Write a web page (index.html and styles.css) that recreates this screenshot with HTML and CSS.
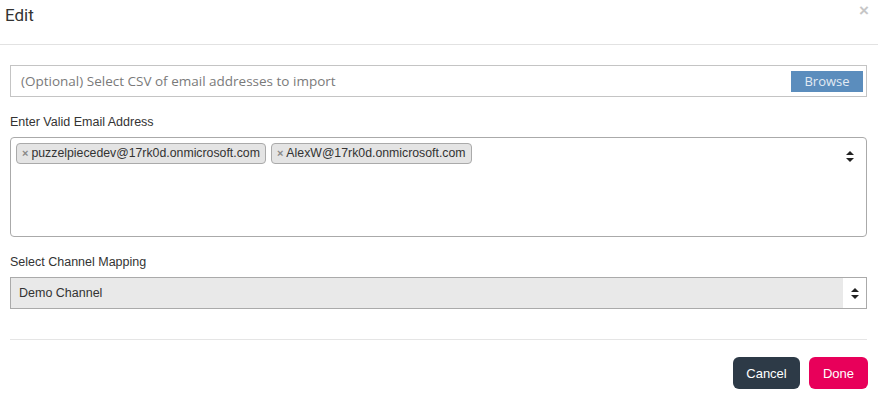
FILE: index.html
```html
<!DOCTYPE html>
<html lang="en">
<head>
<meta charset="UTF-8" />
<meta name="viewport" content="width=device-width, initial-scale=1" />
<title>Edit</title>
<link rel="stylesheet" href="styles.css">
</head>
<body>
  <div class="modal">
    <div class="modal-header">
      <h4>Edit</h4>
      <span class="close">&times;</span>
    </div>

    <div class="modal-body">
      <div class="file-input">
        <span class="file-text">(Optional) Select CSV of email addresses to import</span>
        <span class="browse">Browse</span>
      </div>

      <label class="field-label">Enter Valid Email Address</label>
      <div class="tag-box">
        <div class="tags">
          <span class="tag"><span class="tag-x">&times;</span>puzzelpiecedev@17rk0d.onmicrosoft.com</span>
          <span class="tag"><span class="tag-x">&times;</span>AlexW@17rk0d.onmicrosoft.com</span>
        </div>
        <span class="arrows">
          <svg width="8" height="11" viewBox="0 0 8 11"><path d="M4 0L8 4H0z M4 11L0 7H8z" fill="#222"/></svg>
        </span>
      </div>

      <label class="field-label">Select Channel Mapping</label>
      <div class="select-box">
        <span class="select-value">Demo Channel</span>
        <span class="select-arrows">
          <svg width="8" height="11" viewBox="0 0 8 11"><path d="M4 0L8 4H0z M4 11L0 7H8z" fill="#222"/></svg>
        </span>
      </div>
    </div>

    <div class="modal-footer">
      <button class="btn btn-cancel">Cancel</button>
      <button class="btn btn-done">Done</button>
    </div>
  </div>
</body>
</html>
```

FILE: styles.css
```css
body {
  margin: 0;
  background: #fff;
  font-family: "Liberation Sans", Arial, sans-serif;
  color: #333;
}
.modal {
  width: 878px;
}
.modal-header {
  height: 44px;
  border-bottom: 1px solid #e2e2e2;
  display: flex;
  justify-content: space-between;
  align-items: flex-start;
}
.modal-header h4 {
  margin: 5px 0 0 5px;
  font-family: "Roboto", sans-serif;
  font-weight: 400;
  font-size: 17px;
  color: #333;
}
.close {
  margin: 1px 9px 0 0;
  font-size: 17px;
  color: #c6c6c6;
  font-weight: bold;
}
.modal-body {
  padding: 20px 0 30px 0;
  border-bottom: 1px solid #e5e5e5;
  margin: 0 11px 0 10px;
}
.file-input {
  height: 30px;
  border: 1px solid #c4c4c4;
  display: flex;
  align-items: center;
  justify-content: space-between;
  padding: 0 3px 0 10px;
}
.file-text {
  font-family: "Open Sans", sans-serif;
  font-size: 13.5px;
  color: #7a7a7a;
}
.browse {
  background: #5b8dbd;
  color: #e2eaf3;
  font-family: "Open Sans", sans-serif;
  font-size: 13px;
  width: 72px;
  height: 21px;
  line-height: 21px;
  text-align: center;
}
.field-label {
  display: block;
  font-size: 12.5px;
  color: #333;
  margin: 18px 0 8px 0;
}
.tag-box {
  box-sizing: border-box;
  height: 100px;
  border: 1px solid #aaa;
  border-radius: 4px;
  display: flex;
  justify-content: space-between;
  align-items: flex-start;
  padding: 5px 12px 0 5px;
}
.tags {
  display: flex;
  gap: 5px;
}
.tag {
  background: #e4e4e4;
  border: 1px solid #aaa;
  border-radius: 4px;
  font-size: 12.3px;
  color: #333;
  height: 19px;
  line-height: 19px;
  padding: 0 5px 0 5px;
}
.tag-x {
  color: #888;
  font-weight: bold;
  font-size: 11px;
  margin-right: 3px;
}
.arrows {
  margin-top: 5px;
}
.select-box {
  height: 30px;
  border: 1px solid #aaa;
  background: #e9e9e9;
  display: flex;
  justify-content: space-between;
  align-items: stretch;
}
.select-value {
  font-size: 12.5px;
  color: #333;
  line-height: 30px;
  padding-left: 8px;
}
.select-arrows {
  width: 23px;
  background: #fff;
  display: flex;
  align-items: center;
  justify-content: center;
}
.modal-footer {
  display: flex;
  justify-content: flex-end;
  gap: 9px;
  padding: 17px 10px 0 0;
}
.btn {
  border: none;
  border-radius: 6px;
  color: #fff;
  font-family: "Liberation Sans", Arial, sans-serif;
  font-size: 13px;
  height: 32px;
  cursor: pointer;
}
.btn-cancel {
  background: #2d3a47;
  width: 67px;
}
.btn-done {
  background: #e8005a;
  width: 59px;
}
```
